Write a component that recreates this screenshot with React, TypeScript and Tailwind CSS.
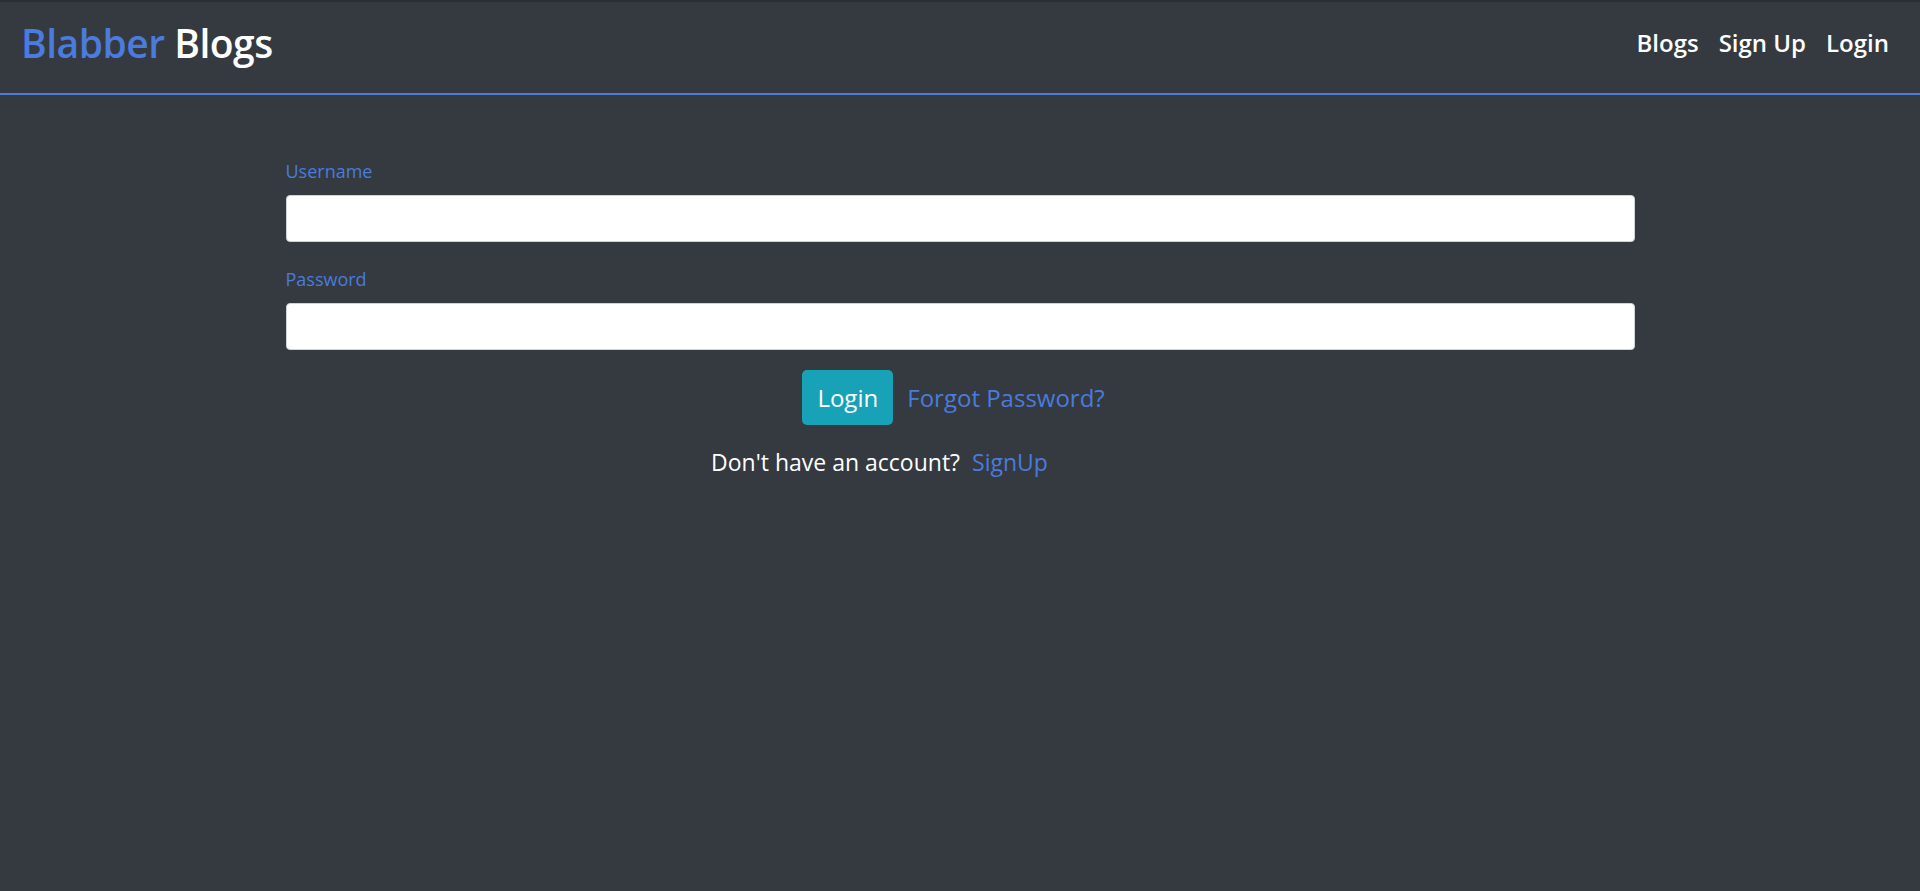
import React from "react";

export default function App() {
  return (
    <div
      className="min-h-[891px] bg-[#343a40] border-t-2 border-[#2b2d30]"
      style={{ fontFamily: '"Open Sans", "Noto Sans", sans-serif' }}
    >
      <nav className="h-[93px] border-b-2 border-[#4a7bdd] flex items-center justify-between pl-[21px] pr-[31px] pb-[10px]">
        <div className="text-[39px] font-semibold leading-none tracking-[-0.5px]">
          <span className="text-[#4a7bdd]">Blabber</span>{" "}
          <span className="text-white">Blogs</span>
        </div>
        <div className="flex items-center gap-[20px] text-[24px] leading-[36px] font-semibold text-white">
          <a>Blogs</a>
          <a>Sign Up</a>
          <a>Login</a>
        </div>
      </nav>
      <main className="w-[1349px] mx-auto pt-[64px]">
        <label className="block text-[18px] text-[#4a7bdd] leading-[24px]">Username</label>
        <input className="mt-[12px] block w-full h-[47px] bg-white rounded-[4px] border border-[#ced4da]" />
        <label className="block mt-[25px] text-[18px] text-[#4a7bdd] leading-[24px]">Password</label>
        <input type="password" className="mt-[12px] block w-full h-[47px] bg-white rounded-[4px] border border-[#ced4da]" />
        <div className="mt-[20px] flex items-center justify-center gap-[14px] pr-[13px]">
          <button className="w-[91px] h-[55px] rounded-[5px] bg-[#17a2b8] text-white text-[24px] leading-none">Login</button>
          <a className="text-[24px] leading-[32px] font-medium text-[#4a7bdd]">Forgot Password?</a>
        </div>
        <div className="mt-[21px] flex justify-center text-[23px] leading-[32px] pr-[161px]">
          <span className="text-white">Don't have an account?</span>
          <a className="ml-[12px] text-[#4a7bdd]">SignUp</a>
        </div>
      </main>
    </div>
  );
}
